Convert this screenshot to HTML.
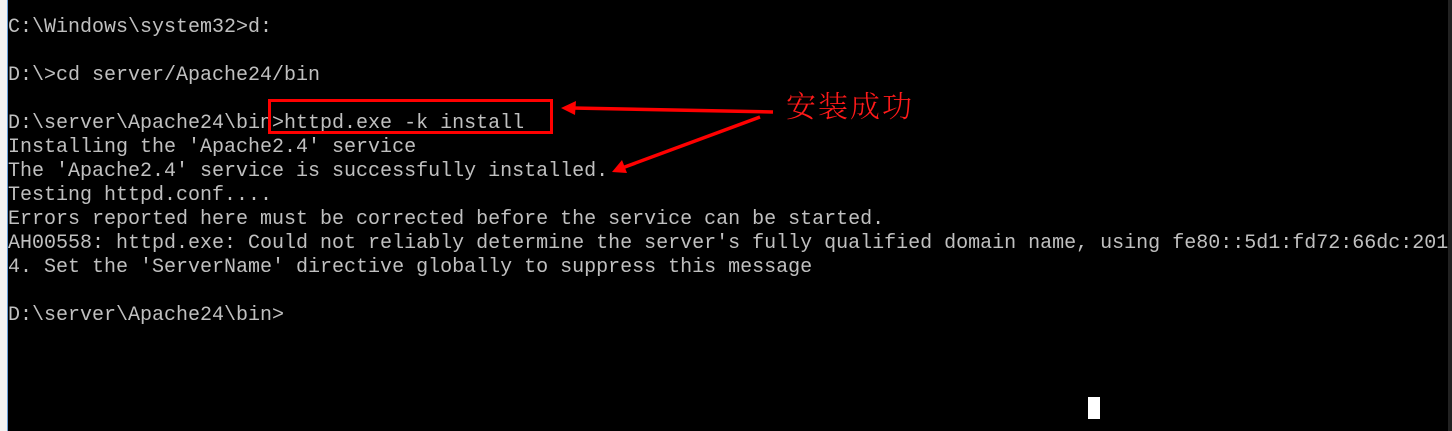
<!DOCTYPE html>
<html><head><meta charset="utf-8"><style>
html,body{margin:0;padding:0;width:1452px;height:431px;overflow:hidden;background:#000;}
.strip{position:absolute;left:0;top:0;width:7px;height:431px;background:#f3f3f3;}
.bl{position:absolute;left:7px;top:0;width:1px;height:431px;background:#6a9fd8;}
.rs{position:absolute;right:0;top:0;width:4px;height:431px;background:#222;}
pre{position:absolute;left:8px;top:16px;margin:0;font-family:"Liberation Mono",monospace;font-size:20px;line-height:24px;color:#c0c0c0;letter-spacing:0;}
.cn{position:absolute;left:786px;top:82px;font-family:"Liberation Serif","Noto Serif CJK SC",serif;font-size:30px;color:#ff1a1a;font-weight:300;letter-spacing:2px;}
.cur{position:absolute;left:1088px;top:397px;width:12px;height:22px;background:#fff;}
</style></head><body>
<div class="strip"></div><div class="bl"></div><div class="rs"></div>
<pre>C:\Windows\system32&gt;d:

D:\&gt;cd server/Apache24/bin

D:\server\Apache24\bin&gt;httpd.exe -k install
Installing the 'Apache2.4' service
The 'Apache2.4' service is successfully installed.
Testing httpd.conf....
Errors reported here must be corrected before the service can be started.
AH00558: httpd.exe: Could not reliably determine the server's fully qualified domain name, using fe80::5d1:fd72:66dc:201
4. Set the 'ServerName' directive globally to suppress this message

D:\server\Apache24\bin&gt;</pre>
<svg width="1452" height="431" style="position:absolute;left:0;top:0">
<rect x="269.5" y="100.5" width="282" height="32" fill="none" stroke="#ff0000" stroke-width="3"/>
<line x1="773" y1="112" x2="572" y2="108" stroke="#ff0000" stroke-width="3.5"/>
<polygon points="561,108 576,101 575,115" fill="#ff0000"/>
<line x1="760" y1="117" x2="622" y2="168" stroke="#ff0000" stroke-width="3.5"/>
<polygon points="612,172 622,160 627,173" fill="#ff0000"/>
</svg>
<div class="cn">安装成功</div>
<div class="cur"></div>
</body></html>
